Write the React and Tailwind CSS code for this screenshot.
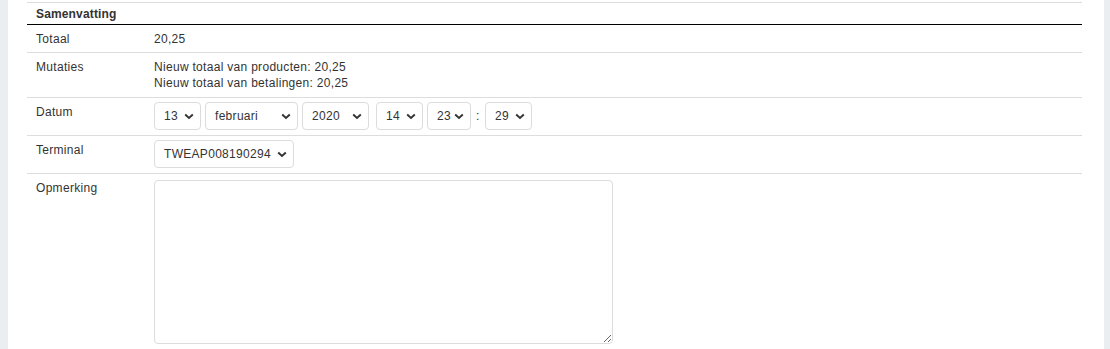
import React from "react";

function Chevron() {
  return (
    <svg width="10" height="7" viewBox="0 0 10 7" className="shrink-0">
      <path d="M1.2 1.5 L5 5 L8.8 1.5" fill="none" stroke="#333" strokeWidth="1.9" />
    </svg>
  );
}

function Select({ value, width }) {
  return (
    <div
      className={`flex h-[28px] items-center justify-between rounded-[4px] border border-[#dcdcdc] bg-white pl-[9px] pr-[6px] ${width}`}
    >
      <span>{value}</span>
      <Chevron />
    </div>
  );
}

function Row({ label, children, pad = "pt-[6px] pb-[6px]" }) {
  return (
    <div className="flex border-b border-[#dddddd]">
      <div className="w-[127px] shrink-0 pl-[9px] pt-[6px] pb-[5px]">{label}</div>
      <div className={`flex-1 ${pad}`}>{children}</div>
    </div>
  );
}

export default function App() {
  return (
    <div
      className="flex h-[349px] w-[1110px] overflow-hidden bg-[#ebeef1] text-[12px] leading-[16px] tracking-[0.3px] text-[#333]"
      style={{ fontFamily: '"Liberation Sans", Arial, sans-serif' }}
    >
      <div className="ml-[8px] w-[1096px] bg-white pt-[2px]">
        <div className="ml-[19px] w-[1055px]">
          <div className="border-t border-[#dddddd] border-b border-b-black pl-[9px] pt-[3px] pb-[2px] font-bold tracking-[0.15px]">
            Samenvatting
          </div>
          <Row label="Totaal" pad="pt-[6px] pb-[5px]">20,25</Row>
          <Row label="Mutaties">
            <div>Nieuw totaal van producten: 20,25</div>
            <div>Nieuw totaal van betalingen: 20,25</div>
          </Row>
          <Row label="Datum" pad="pt-[4px] pb-[5px]">
            <div className="flex items-center">
              <div className="flex gap-[4px]">
                <Select value="13" width="w-[47px]" />
                <Select value="februari" width="w-[93px]" />
                <Select value="2020" width="w-[67px]" />
              </div>
              <div className="ml-[7px] flex items-center">
                <Select value="14" width="w-[47px]" />
                <div className="ml-[4px]">
                  <Select value="23" width="w-[44px]" />
                </div>
                <span className="ml-[5px] w-[4px]">:</span>
                <div className="ml-[5px]">
                  <Select value="29" width="w-[47px]" />
                </div>
              </div>
            </div>
          </Row>
          <Row label="Terminal" pad="pt-[4px] pb-[5px]">
            <Select value="TWEAP008190294" width="w-[140px]" />
          </Row>
          <div className="flex">
            <div className="w-[127px] shrink-0 pl-[9px] pt-[6px]">Opmerking</div>
            <div className="flex-1 pt-[6px]">
              <textarea className="block h-[164px] w-[459px] rounded-[4px] border border-[#dcdcdc] bg-white outline-none" />
            </div>
          </div>
        </div>
      </div>
    </div>
  );
}
